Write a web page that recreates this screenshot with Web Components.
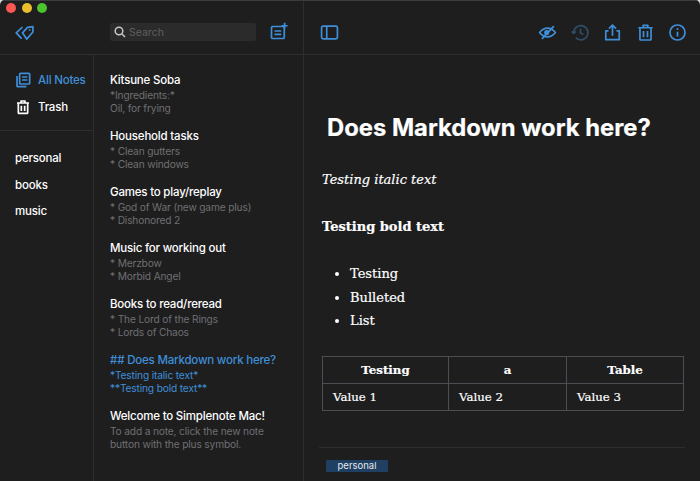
<!DOCTYPE html>
<html>
<head>
<meta charset="utf-8">
<style>
  html, body { margin: 0; height: 100%; background: #d8d8d8; overflow: hidden; }
  body { font-family: Inter, "Liberation Sans", sans-serif; color: #fff; }
</style>
</head>
<body>
<sn-app>
  <sn-toolbar slot="toolbar"></sn-toolbar>
  <sn-sidebar slot="sidebar"></sn-sidebar>
  <div slot="list">
    <sn-note title="Kitsune Soba" l1="*Ingredients:*" l2="Oil, for frying"></sn-note>
    <sn-note title="Household tasks" l1="* Clean gutters" l2="* Clean windows"></sn-note>
    <sn-note title="Games to play/replay" l1="* God of War (new game plus)" l2="* Dishonored 2"></sn-note>
    <sn-note title="Music for working out" l1="* Merzbow" l2="* Morbid Angel"></sn-note>
    <sn-note title="Books to read/reread" l1="* The Lord of the Rings" l2="* Lords of Chaos"></sn-note>
    <sn-note active title="## Does Markdown work here?" l1="*Testing italic text*" l2="**Testing bold text**"></sn-note>
    <sn-note title="Welcome to Simplenote Mac!" l1="To add a note, click the new note" l2="button with the plus symbol."></sn-note>
  </div>
  <sn-editor slot="editor"></sn-editor>
</sn-app>

<script>
const BLUE = "#3f8fd8";

// caixa de base: cada icone e um svg 24x24 com traco azul
const ICONS = {
  tag: `<path d="M9 13 15 6.500 21.500 5.500V12L14 20.500z"/><path d="M9 6 1.500 13 8 20"/><circle cx="17.500" cy="9.500" r="1.100" fill="currentColor" stroke="none"/>`,
  plus: `<rect x="2" y="6" width="17" height="16" rx="1.500"/><path d="M6 12h9M6 16.500h9"/><path d="M19.500 1v8M15.500 5h8"/>`,
  panel: `<rect x="2" y="4" width="20" height="16" rx="2"/><path d="M8.500 4v16"/>`,
  eye: `<path d="M2 12c3-3.800 6.500-5.500 10-5.500S19 8.200 22 12c-3 3.800-6.500 5.500-10 5.500S5 15.800 2 12z"/><circle cx="11" cy="12" r="2.200" fill="currentColor"/><path d="M5 20 20 4"/>`,
  history: `<path d="M3.500 12A9 9 0 1 1 6 18.500"/><path d="M1 10.500l2.500 2.500L6 10.500"/><path d="M12 7v5.500l3.500 2"/>`,
  share: `<path d="M7 10H3.500v11h17V10H17"/><path d="M12 16V3M7.500 7 12 2.500 16.500 7"/>`,
  trash: `<path d="M3 6h18M9 6V3h6v3"/><path d="M5 6v14.500a1 1 0 0 0 1 1h12a1 1 0 0 0 1-1V6"/><path d="M9.500 10v8M14.500 10v8"/>`,
  info: `<circle cx="12" cy="12" r="9.500"/><path d="M12 11v6"/><circle cx="12" cy="7.500" r="1.300" fill="currentColor" stroke="none"/>`,
  notes: `<rect x="7" y="2" width="15" height="16" rx="1.500"/><path d="M10.500 7.500h8M10.500 12h8"/><path d="M3 6v15a1 1 0 0 0 1 1h13"/>`,
};

class SnIcon extends HTMLElement {
  connectedCallback() {
    const size = +this.getAttribute("size") || 20;
    // traco fixo em pixels, qualquer que seja o tamanho do icone
    const stroke = (1.7 * 24) / size;
    const root = this.shadowRoot || this.attachShadow({ mode: "open" });
    root.innerHTML = `
      <style>
        :host { display: inline-flex; color: ${BLUE}; }
        :host([white]) { color: #fff; }
        :host([dim]) { color: #2f4d68; }
        svg { fill: none; stroke: currentColor; stroke-width: ${stroke}; stroke-linejoin: round; }
      </style>
      <svg width="${size}" height="${size}" viewBox="0 0 24 24">${ICONS[this.getAttribute("name")]}</svg>`;
  }
}
customElements.define("sn-icon", SnIcon);

class SnApp extends HTMLElement {
  constructor() {
    super();
    this.attachShadow({ mode: "open" }).innerHTML = `
      <style>
        :host { display: flex; flex-direction: column; height: 481px; width: 700px; background: #1e1e1f; border-radius: 5px 5px 0 0; overflow: hidden; }
        .body { display: flex; flex: 1; min-height: 0; }
        .list { width: 209px; border-right: 1px solid #2e2e2f; box-sizing: content-box; padding-top: 16px; }
      </style>
      <slot name="toolbar"></slot>
      <div class="body">
        <slot name="sidebar"></slot>
        <div class="list"><slot name="list"></slot></div>
        <slot name="editor"></slot>
      </div>`;
  }
}
customElements.define("sn-app", SnApp);

class SnToolbar extends HTMLElement {
  constructor() {
    super();
    this.attachShadow({ mode: "open" }).innerHTML = `
      <style>
        :host { display: flex; height: 55px; box-sizing: border-box; border-top: 1px solid #3c3c3d; border-bottom: 1px solid #2e2e2f; position: relative; }
        .dots { position: absolute; left: 6px; top: 2px; display: flex; gap: 5.500px; }
        .dots i { width: 10px; height: 10px; border-radius: 50%; display: block; }
        .left { width: 304px; display: flex; align-items: flex-start; padding: 21px 15px 0 15px; box-sizing: border-box; border-right: 1px solid #2e2e2f; }
        .search { margin: 1px 0 0 75px; width: 147px; height: 18px; border-radius: 2px; background: #2b2b2c; display: flex; align-items: center; gap: 3px; padding-left: 4px; box-sizing: border-box; font-size: 10.500px; color: #5f5f61; }
        .search svg { fill: none; stroke: #c8c8c8; stroke-width: 1.500; }
        .add { margin-left: 14px; margin-top: 0; }
        .right { flex: 1; display: flex; align-items: flex-start; padding: 22px 13px 0 16px; }
        .actions { margin-left: auto; display: flex; gap: 13.500px; }
      </style>
      <div class="dots"><i style="background:#fc5753"></i><i style="background:#e9bd2b"></i><i style="background:#4dc32f"></i></div>
      <div class="left">
        <sn-icon name="tag" size="20"></sn-icon>
        <div class="search">
          <svg width="12" height="12" viewBox="0 0 12 12"><circle cx="5" cy="5" r="3.800"/><path d="M8 8l3 3"/></svg>
          <span>Search</span>
        </div>
        <sn-icon class="add" name="plus" size="18"></sn-icon>
      </div>
      <div class="right">
        <sn-icon name="panel" size="19"></sn-icon>
        <div class="actions">
          <sn-icon name="eye" size="19"></sn-icon>
          <sn-icon dim name="history" size="19"></sn-icon>
          <sn-icon name="share" size="19"></sn-icon>
          <sn-icon name="trash" size="19"></sn-icon>
          <sn-icon name="info" size="19"></sn-icon>
        </div>
      </div>`;
  }
}
customElements.define("sn-toolbar", SnToolbar);

class SnSidebar extends HTMLElement {
  constructor() {
    super();
    this.attachShadow({ mode: "open" }).innerHTML = `
      <style>
        :host { display: block; width: 94px; box-sizing: border-box; border-right: 1px solid #2e2e2f; font-size: 11.500px; letter-spacing: -0.200px; font-weight: 500; }
        .top { padding: 16px 0 14px 15px; border-bottom: 1px solid #2e2e2f; height: 76px; box-sizing: border-box; display: flex; flex-direction: column; gap: 9px; }
        .row { display: flex; align-items: center; gap: 7px; height: 18px; }
        .row.on { color: ${BLUE}; }
        .tags { padding: 19px 0 0 15px; display: flex; flex-direction: column; gap: 10.500px; }
        .tags div { height: 16px; line-height: 16px; }
      </style>
      <div class="top">
        <div class="row on"><sn-icon name="notes" size="16"></sn-icon><span>All Notes</span></div>
        <div class="row"><sn-icon white name="trash" size="16"></sn-icon><span>Trash</span></div>
      </div>
      <div class="tags"><div>personal</div><div>books</div><div>music</div></div>`;
  }
}
customElements.define("sn-sidebar", SnSidebar);

class SnNote extends HTMLElement {
  connectedCallback() {
    const root = this.shadowRoot || this.attachShadow({ mode: "open" });
    root.innerHTML = `
      <style>
        :host { display: block; height: 56px; padding: 1px 0 0 16px; box-sizing: border-box; white-space: nowrap; }
        .t { font-size: 11.500px; letter-spacing: -0.200px; font-weight: 500; line-height: 17px; color: #fff; }
        .l { font-size: 10.200px; letter-spacing: -0.160px; line-height: 13px; color: #6f6f71; }
        :host([active]) .t, :host([active]) .l { color: ${BLUE}; }
      </style>
      <div class="t">${this.getAttribute("title")}</div>
      <div class="l">${this.getAttribute("l1")}</div>
      <div class="l">${this.getAttribute("l2")}</div>`;
  }
}
customElements.define("sn-note", SnNote);

class SnEditor extends HTMLElement {
  constructor() {
    super();
    this.attachShadow({ mode: "open" }).innerHTML = `
      <style>
        :host { display: block; flex: 1; padding: 0 15px 0 18px; font-family: "DejaVu Serif", "Liberation Serif", serif; font-size: 13px; color: #fff; -webkit-text-stroke: 0.200px #fff; }
        h1 { font-family: Inter, "Liberation Sans", sans-serif; font-size: 23.800px; font-weight: 700; line-height: 30px; margin: 58px 0 0 5px; }
        p { margin: 0; line-height: 20px; }
        .i { margin-top: 27px; font-style: italic; }
        .b { margin-top: 27px; font-weight: 700; font-size: 13px; }
        ul { margin: 25px 0 0; padding: 0 0 0 28px; }
        li { line-height: 23.500px; }
        table { border-collapse: collapse; width: 361px; margin-top: 23px; table-layout: fixed; font-size: 11.800px; }
        th, td { border: 1px solid #4b4e52; height: 26px; padding: 0 10px; text-align: left; }
        th { text-align: center; }
        .foot { margin: 36px 0 0 -3px; border-top: 1px solid #2e2e2f; height: 34px; padding: 12px 0 0 7px; box-sizing: border-box; -webkit-text-stroke: 0; }
        .pill { display: block; width: 62px; height: 12px; line-height: 12px; border-radius: 1px; background: #1f3f63; font-family: Inter, "Liberation Sans", sans-serif; font-size: 9.500px; text-align: center; color: #e4e8ec; }
      </style>
      <h1>Does Markdown work here?</h1>
      <p class="i">Testing italic text</p>
      <p class="b">Testing bold text</p>
      <ul><li>Testing</li><li>Bulleted</li><li>List</li></ul>
      <table>
        <colgroup><col style="width:126px"><col style="width:118px"><col style="width:117px"></colgroup>
        <tr><th>Testing</th><th>a</th><th>Table</th></tr>
        <tr><td>Value 1</td><td>Value 2</td><td>Value 3</td></tr>
      </table>
      <div class="foot"><span class="pill">personal</span></div>`;
  }
}
customElements.define("sn-editor", SnEditor);
</script>
</body>
</html>
